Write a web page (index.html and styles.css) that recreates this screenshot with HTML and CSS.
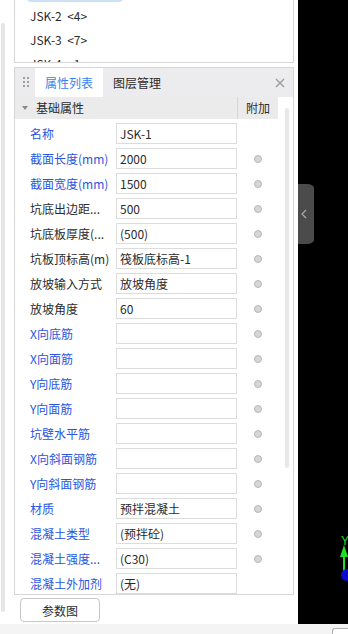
FILE: index.html
```html
<!DOCTYPE html>
<html lang="zh-CN">
<head>
    <meta charset="UTF-8">
    <meta name="viewport" content="width=device-width, initial-scale=1.0">
    <title>属性列表</title>
    <link rel="stylesheet" href="styles.css">
</head>
<body>

<div class="app">
    <div class="main">
        <div class="side">
            <!-- outer scrollbar -->
            <div class="vscroll"><div class="vthumb"></div></div>

            <div class="content">
                <!-- Component list -->
                <div class="list-panel">
                    <ul class="comp-list">
                        <li class="selected">JSK-1&nbsp; &lt;2&gt;</li>
                        <li>JSK-2&nbsp; &lt;4&gt;</li>
                        <li>JSK-3&nbsp; &lt;7&gt;</li>
                        <li>JSK-4&nbsp; &lt;1&gt;</li>
                    </ul>
                </div>

                <!-- Properties panel -->
                <div class="prop-panel">
                    <div class="tabbar">
                        <span class="grip">
                            <svg width="7" height="11" viewBox="0 0 7 11">
                                <rect x="0" y="0" width="2" height="2" fill="#a0a0a0"/>
                                <rect x="4" y="0" width="2" height="2" fill="#a0a0a0"/>
                                <rect x="0" y="4" width="2" height="2" fill="#a0a0a0"/>
                                <rect x="4" y="4" width="2" height="2" fill="#a0a0a0"/>
                                <rect x="0" y="8" width="2" height="2" fill="#a0a0a0"/>
                                <rect x="4" y="8" width="2" height="2" fill="#a0a0a0"/>
                            </svg>
                        </span>
                        <span class="tab active">属性列表</span>
                        <span class="tab">图层管理</span>
                        <span class="close">
                            <svg width="10" height="10" viewBox="0 0 10 10">
                                <path d="M1 1 L9 9 M9 1 L1 9" stroke="#9a9a9a" stroke-width="1.3" fill="none"/>
                            </svg>
                        </span>
                    </div>

                    <div class="prop-body">
                        <div class="prop-table">
                            <div class="group-row">
                                <span class="group-title"><span class="caret"></span>基础属性</span>
                                <span class="extra-head">附加</span>
                            </div>
                            <div class="rows">
                                <div class="row"><span class="label blue">名称</span><input type="text" value="JSK-1"><span class="extra"></span></div>
                                <div class="row"><span class="label blue">截面长度(mm)</span><input type="text" value="2000"><span class="extra"><i class="dot"></i></span></div>
                                <div class="row"><span class="label blue">截面宽度(mm)</span><input type="text" value="1500"><span class="extra"><i class="dot"></i></span></div>
                                <div class="row"><span class="label">坑底出边距...</span><input type="text" value="500"><span class="extra"><i class="dot"></i></span></div>
                                <div class="row"><span class="label">坑底板厚度(...</span><input type="text" value="(500)"><span class="extra"><i class="dot"></i></span></div>
                                <div class="row"><span class="label">坑板顶标高(m)</span><input type="text" value="筏板底标高-1"><span class="extra"><i class="dot"></i></span></div>
                                <div class="row"><span class="label">放坡输入方式</span><input type="text" value="放坡角度"><span class="extra"><i class="dot"></i></span></div>
                                <div class="row"><span class="label">放坡角度</span><input type="text" value="60"><span class="extra"><i class="dot"></i></span></div>
                                <div class="row"><span class="label blue">X向底筋</span><input type="text" value=""><span class="extra"><i class="dot"></i></span></div>
                                <div class="row"><span class="label blue">X向面筋</span><input type="text" value=""><span class="extra"><i class="dot"></i></span></div>
                                <div class="row"><span class="label blue">Y向底筋</span><input type="text" value=""><span class="extra"><i class="dot"></i></span></div>
                                <div class="row"><span class="label blue">Y向面筋</span><input type="text" value=""><span class="extra"><i class="dot"></i></span></div>
                                <div class="row"><span class="label blue">坑壁水平筋</span><input type="text" value=""><span class="extra"><i class="dot"></i></span></div>
                                <div class="row"><span class="label blue">X向斜面钢筋</span><input type="text" value=""><span class="extra"><i class="dot"></i></span></div>
                                <div class="row"><span class="label blue">Y向斜面钢筋</span><input type="text" value=""><span class="extra"><i class="dot"></i></span></div>
                                <div class="row"><span class="label blue">材质</span><input type="text" value="预拌混凝土"><span class="extra"><i class="dot"></i></span></div>
                                <div class="row"><span class="label blue">混凝土类型</span><input type="text" value="(预拌砼)"><span class="extra"><i class="dot"></i></span></div>
                                <div class="row"><span class="label blue">混凝土强度...</span><input type="text" value="(C30)"><span class="extra"><i class="dot"></i></span></div>
                                <div class="row"><span class="label blue">混凝土外加剂</span><input type="text" value="(无)"><span class="extra"></span></div>
                            </div>
                        </div>
                        <div class="pscroll"><div class="pthumb"></div></div>
                    </div>
                </div>

                <div class="btn-row">
                    <button type="button">参数图</button>
                </div>
            </div>
        </div>

        <!-- 3D view -->
        <div class="viewport">
            <div class="side-tab">
                <svg width="6" height="10" viewBox="0 0 6 10">
                    <path d="M5 1 L1 5 L5 9" stroke="#a8a8a8" stroke-width="1.2" fill="none"/>
                </svg>
            </div>
            <svg class="gizmo" width="10" height="54" viewBox="0 0 10 54">
                <text x="3" y="15" font-size="12" fill="#22dd22" font-family="Liberation Sans, sans-serif">Y</text>
                <polygon points="6,15 2,27 10,27" fill="#22dd22"/>
                <rect x="5" y="26" width="2" height="16" fill="#22dd22"/>
                <circle cx="9" cy="45" r="6" fill="#0a0ad0"/>
            </svg>
        </div>
    </div>

    <div class="statusbar"><span class="status-box"></span></div>
</div>

</body>
</html>
```

FILE: styles.css
```css
body {
    margin: 0;
    font-family: "Noto Sans CJK SC", "Noto Sans", sans-serif;
    font-size: 12px;
    color: #2b2b2b;
    background-color: #fff;
}
.app {
    width: 348px;
    height: 634px;
    overflow: hidden;
}
.main {
    display: flex;
    height: 624px;
}
.side {
    width: 298px;
    display: flex;
    background-color: #fff;
}
.vscroll {
    width: 14px;
}
.vthumb {
    margin: 23px 0 0 1px;
    width: 4px;
    height: 589px;
    background-color: #e6e6e6;
    border-radius: 2px;
}
.content {
    width: 280px;
    display: flex;
    flex-direction: column;
}

/* component list */
.list-panel {
    height: 63px;
    box-sizing: border-box;
    border: 1px solid #d6d6d6;
    border-top: none;
    overflow: hidden;
}
.comp-list {
    list-style: none;
    margin: -20px 0 0 0;
    padding: 0;
}
.comp-list li {
    height: 24px;
    line-height: 24px;
    padding-left: 15px;
    white-space: nowrap;
}
.comp-list li.selected {
    height: 22px;
    line-height: 22px;
    margin: 0 0 2px 12px;
    padding-left: 3px;
    width: 93px;
    background-color: #cce0f7;
    border-radius: 4px;
}

/* properties panel */
.prop-panel {
    margin-top: 4px;
    height: 528px;
    box-sizing: border-box;
    border: 1px solid #d6d6d6;
    display: flex;
    flex-direction: column;
}
.tabbar {
    height: 29px;
    flex: none;
    display: flex;
    align-items: stretch;
    background-color: #ececef;
}
.grip {
    width: 20px;
    display: flex;
    align-items: center;
    justify-content: center;
    padding-left: 2px;
    box-sizing: border-box;
}
.tab {
    display: flex;
    align-items: center;
    line-height: 29px;
}
.tab.active {
    width: 68px;
    justify-content: center;
    background-color: #fff;
    color: #3a82ee;
}
.tab + .tab {
    padding-left: 10px;
}
.close {
    margin-left: auto;
    width: 26px;
    display: flex;
    align-items: center;
    justify-content: center;
}
.prop-body {
    flex: 1;
    display: flex;
    overflow: hidden;
}
.prop-table {
    width: 263px;
    flex: none;
}
.group-row {
    height: 22px;
    display: flex;
    background-color: #ebebeb;
    line-height: 22px;
}
.group-title {
    width: 223px;
    display: flex;
    align-items: center;
    padding-left: 7px;
    box-sizing: border-box;
}
.caret {
    width: 0;
    height: 0;
    border-left: 3px solid transparent;
    border-right: 3px solid transparent;
    border-top: 4px solid #8a8a8a;
    margin-right: 8px;
}
.extra-head {
    width: 40px;
    border-left: 1px solid #d6d6d6;
    text-align: center;
}
.rows {
    padding-top: 4px;
}
.row {
    height: 25px;
    display: flex;
    align-items: flex-start;
}
.label {
    width: 101px;
    padding-left: 15px;
    box-sizing: border-box;
    line-height: 21px;
    white-space: nowrap;
    overflow: hidden;
}
.label.blue {
    color: #2a55e0;
}
.row input {
    width: 121px;
    height: 21px;
    box-sizing: border-box;
    margin: 0;
    padding: 0 3px;
    border: 1px solid #dcdcdc;
    border-radius: 0;
    font: inherit;
    color: #2b2b2b;
    background-color: #fff;
    outline: none;
}
.extra {
    width: 41px;
    height: 21px;
    display: flex;
    align-items: center;
    justify-content: center;
}
.dot {
    width: 8px;
    height: 8px;
    box-sizing: border-box;
    border: 1px solid #b8b8b8;
    border-radius: 50%;
    background-color: #d6d6d6;
}
.pscroll {
    width: 15px;
}
.pthumb {
    margin: 11px 0 0 7px;
    width: 4px;
    height: 360px;
    background-color: #e8e8e8;
    border-radius: 2px;
}

.btn-row {
    padding: 3px 0 0 6px;
}
.btn-row button {
    width: 80px;
    height: 24px;
    background-color: #fff;
    border: 1px solid #c8c8c8;
    border-radius: 4px;
    font: inherit;
    color: #2b2b2b;
    padding: 0;
}

/* 3D view */
.viewport {
    flex: 1;
    background-color: #000;
    position: relative;
    overflow: hidden;
}
.side-tab {
    position: absolute;
    left: 0;
    top: 184px;
    width: 16px;
    height: 60px;
    background-color: #4b4b4b;
    border-radius: 0 7px 7px 0 / 0 4px 4px 0;
    display: flex;
    align-items: center;
    justify-content: center;
    padding-right: 4px;
    box-sizing: border-box;
}
.gizmo {
    position: absolute;
    left: 40px;
    top: 530px;
}

.statusbar {
    height: 10px;
    background-color: #f4f4f4;
    display: flex;
}
.status-box {
    margin: 4px 0 0 332px;
    width: 16px;
    height: 6px;
    box-sizing: border-box;
    border: 1px solid #b0b0b0;
    border-right: none;
    border-bottom: none;
    border-top-left-radius: 3px;
    background-color: #fff;
}
```
